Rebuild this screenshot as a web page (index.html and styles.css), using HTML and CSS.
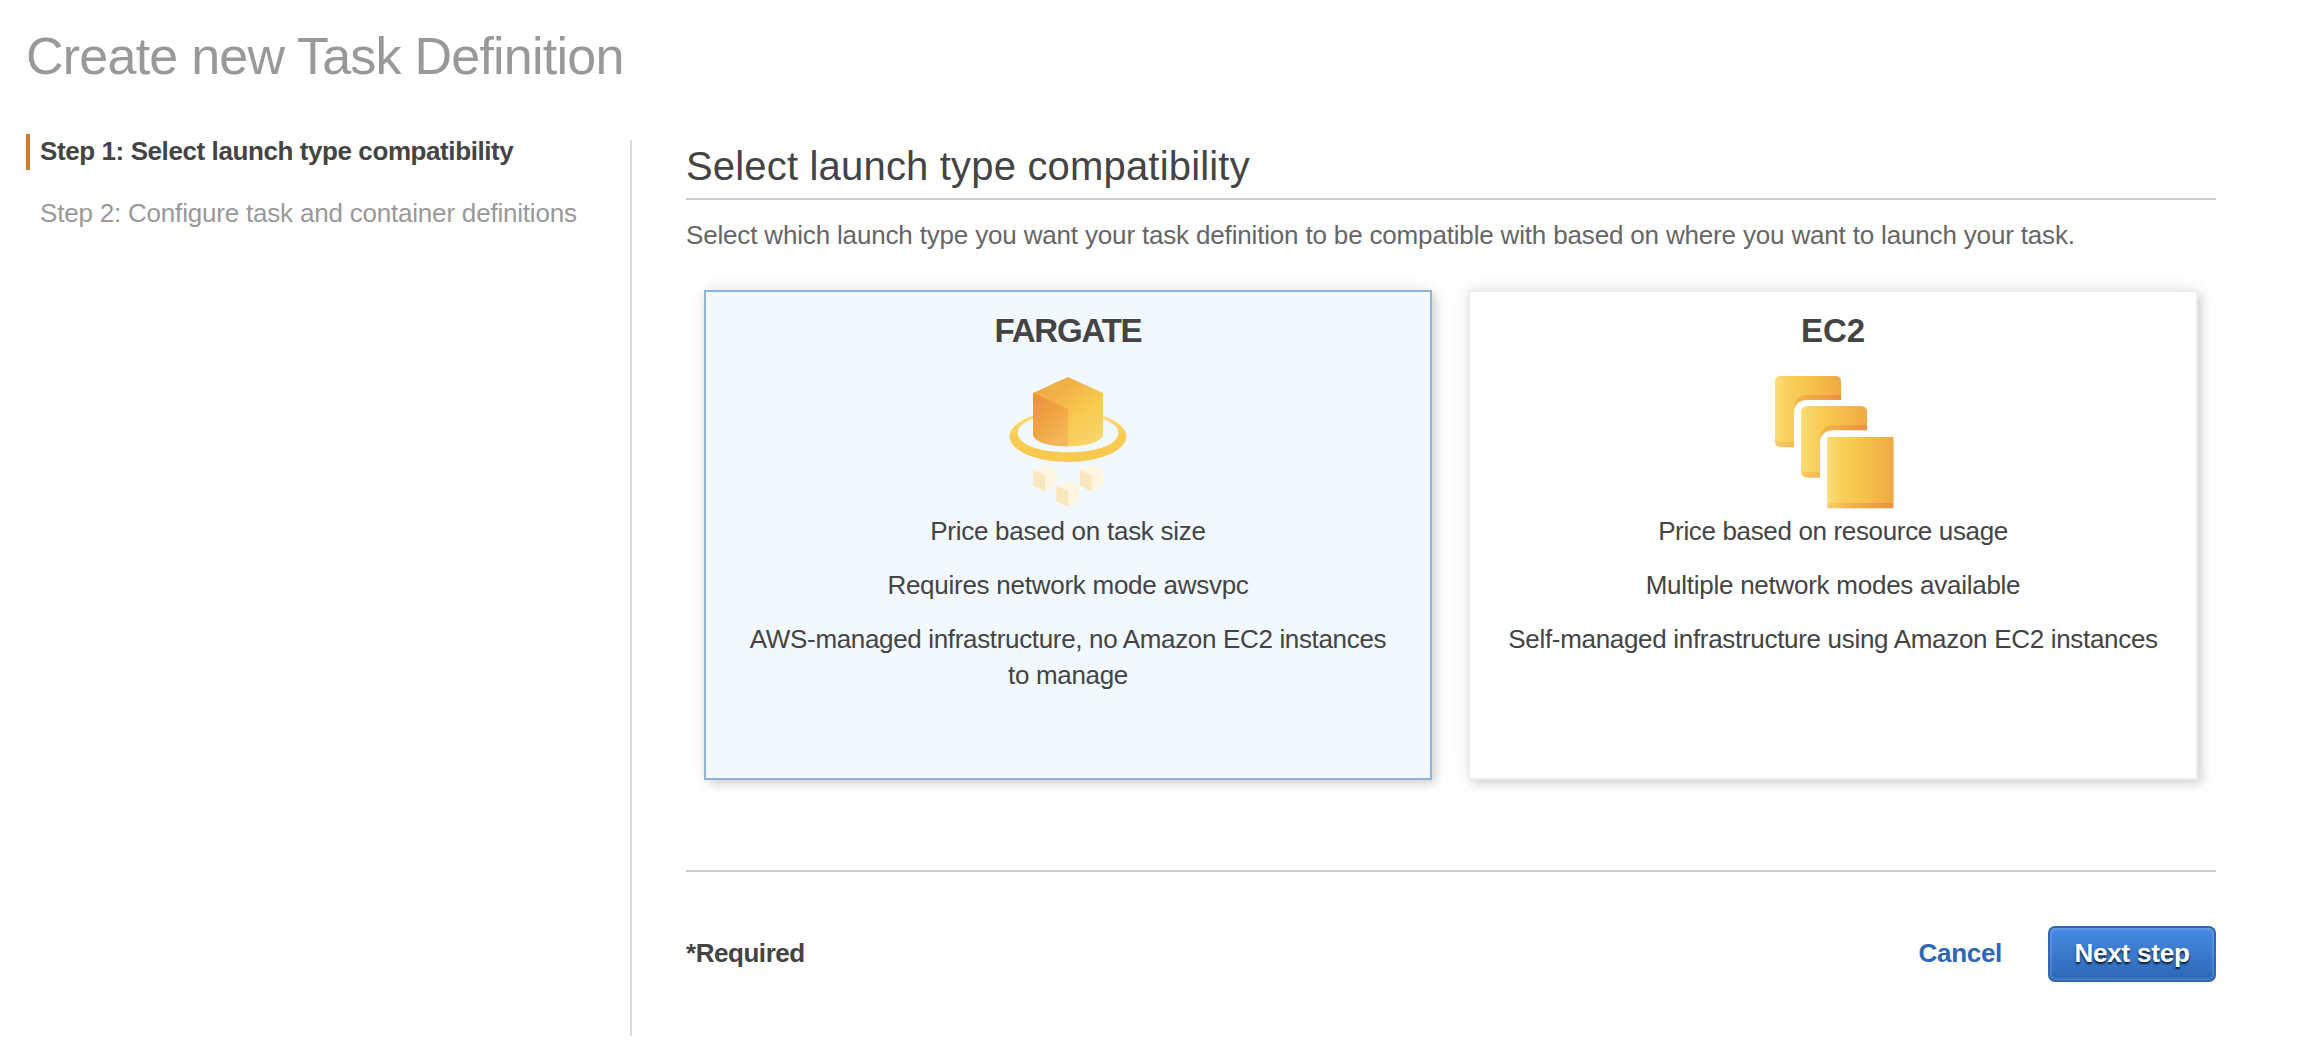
FILE: index.html
```html
<!DOCTYPE html>
<html lang="en">
<head>
<meta charset="utf-8">
<title>Create new Task Definition</title>
<link rel="stylesheet" href="styles.css">
</head>
<body>
<div class="page">
  <nav class="sidebar">
    <h1 class="page-title">Create new Task Definition</h1>
    <ol class="steps">
      <li class="step step-active">Step 1: Select launch type compatibility</li>
      <li class="step">Step 2: Configure task and container definitions</li>
    </ol>
  </nav>
  <main class="content">
    <h2 class="section-title">Select launch type compatibility</h2>
    <p class="description">Select which launch type you want your task definition to be compatible with based on where you want to launch your task.</p>
    <div class="cards">
      <section class="card card-selected">
        <h3 class="card-title card-title-fargate">FARGATE</h3>
        <svg class="icon-fargate" viewBox="84 45 360 414" aria-hidden="true">
          <defs>
            <linearGradient id="top" x1="0" y1="0" x2="0.8" y2="1"><stop offset="0" stop-color="#efa741"/><stop offset="0.35" stop-color="#f2b247"/><stop offset="0.65" stop-color="#f8ca4e"/><stop offset="1" stop-color="#f9d46b"/></linearGradient>
            <linearGradient id="side" x1="0" y1="0" x2="0.6" y2="1"><stop offset="0" stop-color="#ea8f41"/><stop offset="0.6" stop-color="#f0a642"/><stop offset="1" stop-color="#f4b75b"/></linearGradient>
            <linearGradient id="ring" x1="0" y1="0" x2="0" y2="1"><stop offset="0" stop-color="#fbe27c"/><stop offset="0.5" stop-color="#f8cc52"/><stop offset="1" stop-color="#f7c94d"/></linearGradient>
          </defs>
          <path fill="url(#ring)" fill-rule="evenodd" d="M264 152C361 152 439 186 439 229S361 306 264 306 89 272 89 229 167 152 264 152ZM264 162C181 162 113 184 113 219S181 277 264 277 415 254 415 219 347 162 264 162Z"/>
          <path fill="url(#top)" d="M264 51L369 99V222C369 244 324 259 264 259S159 244 159 222V99Z"/>
          <path fill="url(#side)" d="M159 99L264 148V259C204 259 159 244 159 222Z"/>
          <g fill="#fff6e2">
            <path d="M159 331L195 315 230 331V377L195 394 159 377Z"/>
            <path d="M300 331L335 315 370 331V377L335 394 300 377Z"/>
            <path d="M229 378L265 362 300 378V424L265 440 229 424Z"/>
          </g>
          <g fill="#fbe7bd">
            <path d="M159 331L195 346V394L159 377Z"/>
            <path d="M300 331L335 346V394L300 377Z"/>
            <path d="M229 378L265 393V440L229 424Z"/>
          </g>
        </svg>
        <p class="feature">Price based on task size</p>
        <p class="feature">Requires network mode awsvpc</p>
        <p class="feature feature-wide">AWS-managed infrastructure, no Amazon EC2 instances to manage</p>
      </section>
      <section class="card">
        <h3 class="card-title">EC2</h3>
        <svg class="icon-ec2" viewBox="93 45 372 414" aria-hidden="true">
          <defs>
            <linearGradient id="face" x1="0" y1="0" x2="1" y2="0"><stop offset="0" stop-color="#fbe07a"/><stop offset="0.15" stop-color="#f8d161"/><stop offset="0.4" stop-color="#f7c94f"/><stop offset="1" stop-color="#f0aa43"/></linearGradient>
            <linearGradient id="edge" x1="0" y1="0" x2="1" y2="0"><stop offset="0" stop-color="#f8cb65"/><stop offset="0.4" stop-color="#f2b048"/><stop offset="1" stop-color="#eb9142"/></linearGradient>
            <g id="layer">
              <path fill="url(#edge)" d="M125 48H284Q303 48 303 67V120H201Q162 122 162 160V262H125Q105 262 105 242V68Q105 48 125 48Z"/>
              <path fill="url(#face)" d="M125 48H284Q303 48 303 67V105H201Q162 107 162 146V246H125Q105 246 105 228V68Q105 48 125 48Z"/>
            </g>
          </defs>
          <use href="#layer"/>
          <use href="#layer" x="78" y="91"/>
          <rect x="262" y="231" width="198" height="214" rx="3" fill="url(#edge)"/>
          <path fill="url(#face)" d="M265 231H457Q460 231 460 234V429H262V234Q262 231 265 231Z"/>
        </svg>
        <p class="feature feature-price">Price based on resource usage</p>
        <p class="feature">Multiple network modes available</p>
        <p class="feature feature-self">Self-managed infrastructure using Amazon EC2 instances</p>
      </section>
    </div>
    <footer class="actions">
      <span class="required">*Required</span>
      <a class="cancel" href="#">Cancel</a>
      <button class="next" type="button">Next step</button>
    </footer>
  </main>
</div>
</body>
</html>
```
FILE: styles.css
```css
* { box-sizing: border-box; }
body {
  margin: 0;
  background: #fff;
  color: #444;
  font: 26px/36px "Liberation Sans", Arial, sans-serif;
}
h1, h2, h3, p, ol { margin: 0; padding: 0; font-weight: normal; }
.page { display: flex; height: 1042px; }
.sidebar { width: 630px; flex: none; padding: 26px 0 0 26px; }
.page-title {
  color: #999;
  font-size: 52px;
  line-height: 60px;
  letter-spacing: -0.77px;
  white-space: nowrap;
}
.steps { list-style: none; margin-top: 48px; display: grid; gap: 26px; }
.step {
  border-left: 4px solid transparent;
  padding: 0 0 2px 10px;
  line-height: 34px;
  color: #999;
  letter-spacing: -0.2px;
  white-space: nowrap;
}
.step-active {
  border-left-color: #d17b2c;
  color: #444;
  font-weight: bold;
  letter-spacing: -0.41px;
}
.content {
  width: 1586px;
  height: 896px;
  margin-top: 140px;
  padding: 4px 0 0 54px;
  border-left: 2px solid #ddd;
}
.section-title {
  font-size: 40px;
  line-height: 44px;
  letter-spacing: 0.18px;
  padding-bottom: 10px;
  border-bottom: 2px solid #ccc;
}
.description {
  margin-top: 17px;
  color: #666;
  letter-spacing: -0.168px;
  white-space: nowrap;
}
.cards {
  display: grid;
  grid-template-columns: 728px 730px;
  gap: 36px;
  margin-top: 37px;
  padding: 0 18px;
}
.card {
  height: 490px;
  padding: 20px 33px 0;
  border: 2px solid #ededed;
  background: #fff;
  text-align: center;
  box-shadow: 4px 4px 10px rgba(0, 0, 0, 0.17), -3px -5px 18px rgba(0, 0, 0, 0.05);
}
.card-selected { background: #f1f8fe; border-color: #8fb4da; }
.card-title { font-size: 33px; line-height: 37px; font-weight: bold; }
.card-title-fargate { letter-spacing: -1.2px; }
.icon-fargate, .icon-ec2 { display: block; height: 138px; margin: 26px auto 0; }
.icon-fargate { width: 120px; }
.icon-ec2 { width: 124px; }
.feature { margin-bottom: 18px; letter-spacing: -0.26px; }
.feature-price { letter-spacing: -0.35px; }
.feature-wide { letter-spacing: -0.34px; }
.feature-self { letter-spacing: -0.31px; }
.actions {
  display: flex;
  margin-top: 90px;
  padding-top: 54px;
  border-top: 2px solid #ccc;
  font-weight: bold;
  line-height: 54px;
}
.required { letter-spacing: -0.45px; margin-right: auto; }
.cancel { color: #2e67b5; text-decoration: none; letter-spacing: -0.3px; margin-right: 46px; }
.next {
  width: 168px;
  height: 56px;
  padding: 0 0 2px;
  border: 2px solid #2d66b6;
  border-radius: 7px;
  background: linear-gradient(#478be3, #2c67b6);
  box-shadow: inset 0 0 3px 1px rgba(255, 255, 255, 0.25);
  color: #fff;
  font: bold 26px/50px "Liberation Sans", Arial, sans-serif;
  letter-spacing: -0.2px;
  text-shadow: 0 2px 2px rgba(0, 0, 0, 0.8);
}
```
